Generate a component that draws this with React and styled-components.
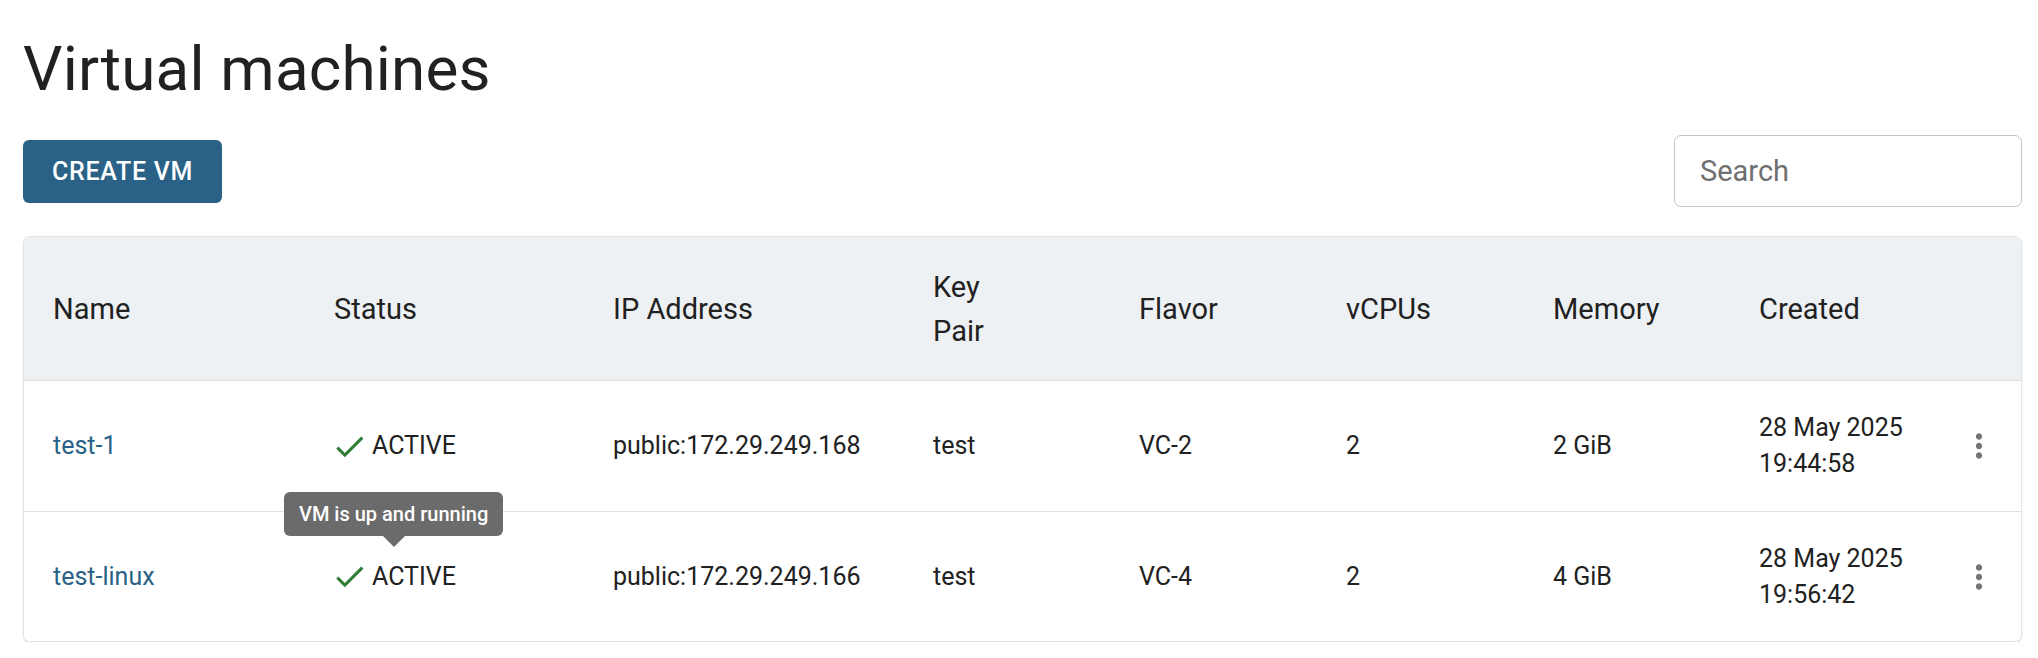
import React from "react";
import styled, { createGlobalStyle } from "styled-components";

const GlobalStyle = createGlobalStyle`
  body {
    margin: 0;
    background: #ffffff;
    font-family: Roboto, "Liberation Sans", sans-serif;
    color: #212121;
  }
`;

const Page = styled.div`
  padding: 32px 16px 0 23px;
`;

const Title = styled.h1`
  margin: 0;
  font-size: 62px;
  font-weight: 400;
  line-height: 1.2;
  color: #212121;
  letter-spacing: 0.2px;
`;

const Toolbar = styled.div`
  display: flex;
  align-items: center;
  justify-content: space-between;
  margin-top: 29px;
  margin-bottom: 29px;
`;

const CreateButton = styled.button`
  height: 63px;
  width: 199px;
  border: none;
  border-radius: 6px;
  background: #2a6287;
  color: #ffffff;
  font-family: Roboto, "Liberation Sans", sans-serif;
  font-size: 25px;
  font-weight: 500;
  letter-spacing: 0.7px;
  text-transform: uppercase;
  cursor: pointer;
`;

const SearchInput = styled.input`
  box-sizing: border-box;
  width: 348px;
  height: 72px;
  padding: 0 25px;
  border: 1.5px solid #c4c4c4;
  border-radius: 7px;
  font-family: Roboto, "Liberation Sans", sans-serif;
  font-size: 29px;
  color: #212121;
  outline: none;
  &::placeholder {
    color: #6f6f6f;
  }
`;

const Card = styled.div`
  position: relative;
  border: 1px solid #e3e3e3;
  border-radius: 7px;
  overflow: hidden;
  box-shadow: 0 2px 1px -1px rgba(0, 0, 0, 0.12), 0 1px 2px 0 rgba(0, 0, 0, 0.1);
`;

const Table = styled.table`
  width: 100%;
  border-collapse: collapse;
  table-layout: fixed;
`;

const HeadRow = styled.tr`
  background: #eef1f4;
`;

const HeadCell = styled.th`
  padding: 29px 29px 27px;
  text-align: left;
  font-size: 29px;
  font-weight: 400;
  line-height: 1.5;
  color: #212121;
  border-bottom: 1.5px solid #e0e0e0;
  vertical-align: middle;
`;

const HeadLabel = styled.span`
  display: block;
  width: ${(p) => (p.$wrap ? "min-content" : "auto")};
`;

const BodyRow = styled.tr`
  border-bottom: ${(p) => (p.$last ? "none" : "1.5px solid #e0e0e0")};
`;

const Cell = styled.td`
  position: relative;
  padding: 29px 29px;
  padding-right: ${(p) => (p.$tight ? "0" : "29px")};
  text-align: left;
  font-size: 25px;
  line-height: 1.43;
  color: #212121;
  vertical-align: middle;
`;

const ActionCell = styled.td`
  padding: 29px 0 29px 6px;
  text-align: center;
  vertical-align: middle;
`;

const NameLink = styled.a`
  color: #2a6287;
  text-decoration: none;
`;

const Status = styled.div`
  display: flex;
  align-items: center;
  gap: 4px;
  margin-left: -3px;
  text-transform: uppercase;
`;

const Tooltip = styled.div`
  position: absolute;
  left: -21px;
  top: -20px;
  padding: 7px 15px;
  background: #6b6b6b;
  color: #ffffff;
  border-radius: 6px;
  font-size: 20px;
  font-weight: 500;
  line-height: 1.5;
  white-space: nowrap;
  z-index: 2;
  &::after {
    content: "";
    position: absolute;
    left: 50%;
    bottom: -11px;
    margin-left: -11px;
    border-left: 11px solid transparent;
    border-right: 11px solid transparent;
    border-top: 11px solid #6b6b6b;
  }
`;

const KebabButton = styled.button`
  display: inline-flex;
  align-items: center;
  justify-content: center;
  width: 54px;
  height: 54px;
  padding: 0;
  border: none;
  border-radius: 50%;
  background: transparent;
  color: #757575;
  cursor: pointer;
`;

const CheckIcon = () => (
  <svg width="37" height="37" viewBox="0 0 24 24" fill="#2e7d32">
    <path d="M9 16.17 4.83 12l-1.42 1.41L9 19 21 7l-1.41-1.41z" />
  </svg>
);

const MoreIcon = () => (
  <svg width="38" height="38" viewBox="0 0 24 24" fill="currentColor">
    <path d="M12 8c1.1 0 2-.9 2-2s-.9-2-2-2-2 .9-2 2 .9 2 2 2m0 2c-1.1 0-2 .9-2 2s.9 2 2 2 2-.9 2-2-.9-2-2-2m0 6c-1.1 0-2 .9-2 2s.9 2 2 2 2-.9 2-2-.9-2-2-2" />
  </svg>
);

const columns = [
  { key: "name", label: "Name", width: 281 },
  { key: "status", label: "Status", width: 279 },
  { key: "ip", label: "IP Address", width: 320 },
  { key: "keyPair", label: "Key Pair", width: 206, wrap: true },
  { key: "flavor", label: "Flavor", width: 207 },
  { key: "vcpus", label: "vCPUs", width: 207 },
  { key: "memory", label: "Memory", width: 206 },
  { key: "created", label: "Created", width: 200 },
];

const vms = [
  {
    name: "test-1",
    status: "Active",
    ip: "public:172.29.249.168",
    keyPair: "test",
    flavor: "VC-2",
    vcpus: 2,
    memory: "2 GiB",
    created: "28 May 2025 19:44:58",
  },
  {
    name: "test-linux",
    status: "Active",
    ip: "public:172.29.249.166",
    keyPair: "test",
    flavor: "VC-4",
    vcpus: 2,
    memory: "4 GiB",
    created: "28 May 2025 19:56:42",
    tooltip: "VM is up and running",
  },
];

const App = () => {
  return (
    <Page>
      <GlobalStyle />
      <Title>Virtual machines</Title>
      <Toolbar>
        <CreateButton>Create VM</CreateButton>
        <SearchInput placeholder="Search" />
      </Toolbar>
      <Card>
        <Table>
          <colgroup>
            {columns.map((col) => (
              <col key={col.key} style={{ width: col.width }} />
            ))}
            <col />
          </colgroup>
          <thead>
            <HeadRow>
              {columns.map((col) => (
                <HeadCell key={col.key}>
                  <HeadLabel $wrap={col.wrap}>{col.label}</HeadLabel>
                </HeadCell>
              ))}
              <HeadCell />
            </HeadRow>
          </thead>
          <tbody>
            {vms.map((vm, index) => (
              <BodyRow key={vm.name} $last={index === vms.length - 1}>
                <Cell>
                  <NameLink href="#">{vm.name}</NameLink>
                </Cell>
                <Cell>
                  {vm.tooltip && <Tooltip>{vm.tooltip}</Tooltip>}
                  <Status>
                    <CheckIcon />
                    {vm.status}
                  </Status>
                </Cell>
                <Cell>{vm.ip}</Cell>
                <Cell>{vm.keyPair}</Cell>
                <Cell>{vm.flavor}</Cell>
                <Cell>{vm.vcpus}</Cell>
                <Cell>{vm.memory}</Cell>
                <Cell $tight>{vm.created}</Cell>
                <ActionCell>
                  <KebabButton aria-label="More actions">
                    <MoreIcon />
                  </KebabButton>
                </ActionCell>
              </BodyRow>
            ))}
          </tbody>
        </Table>
      </Card>
    </Page>
  );
};

export default App;
